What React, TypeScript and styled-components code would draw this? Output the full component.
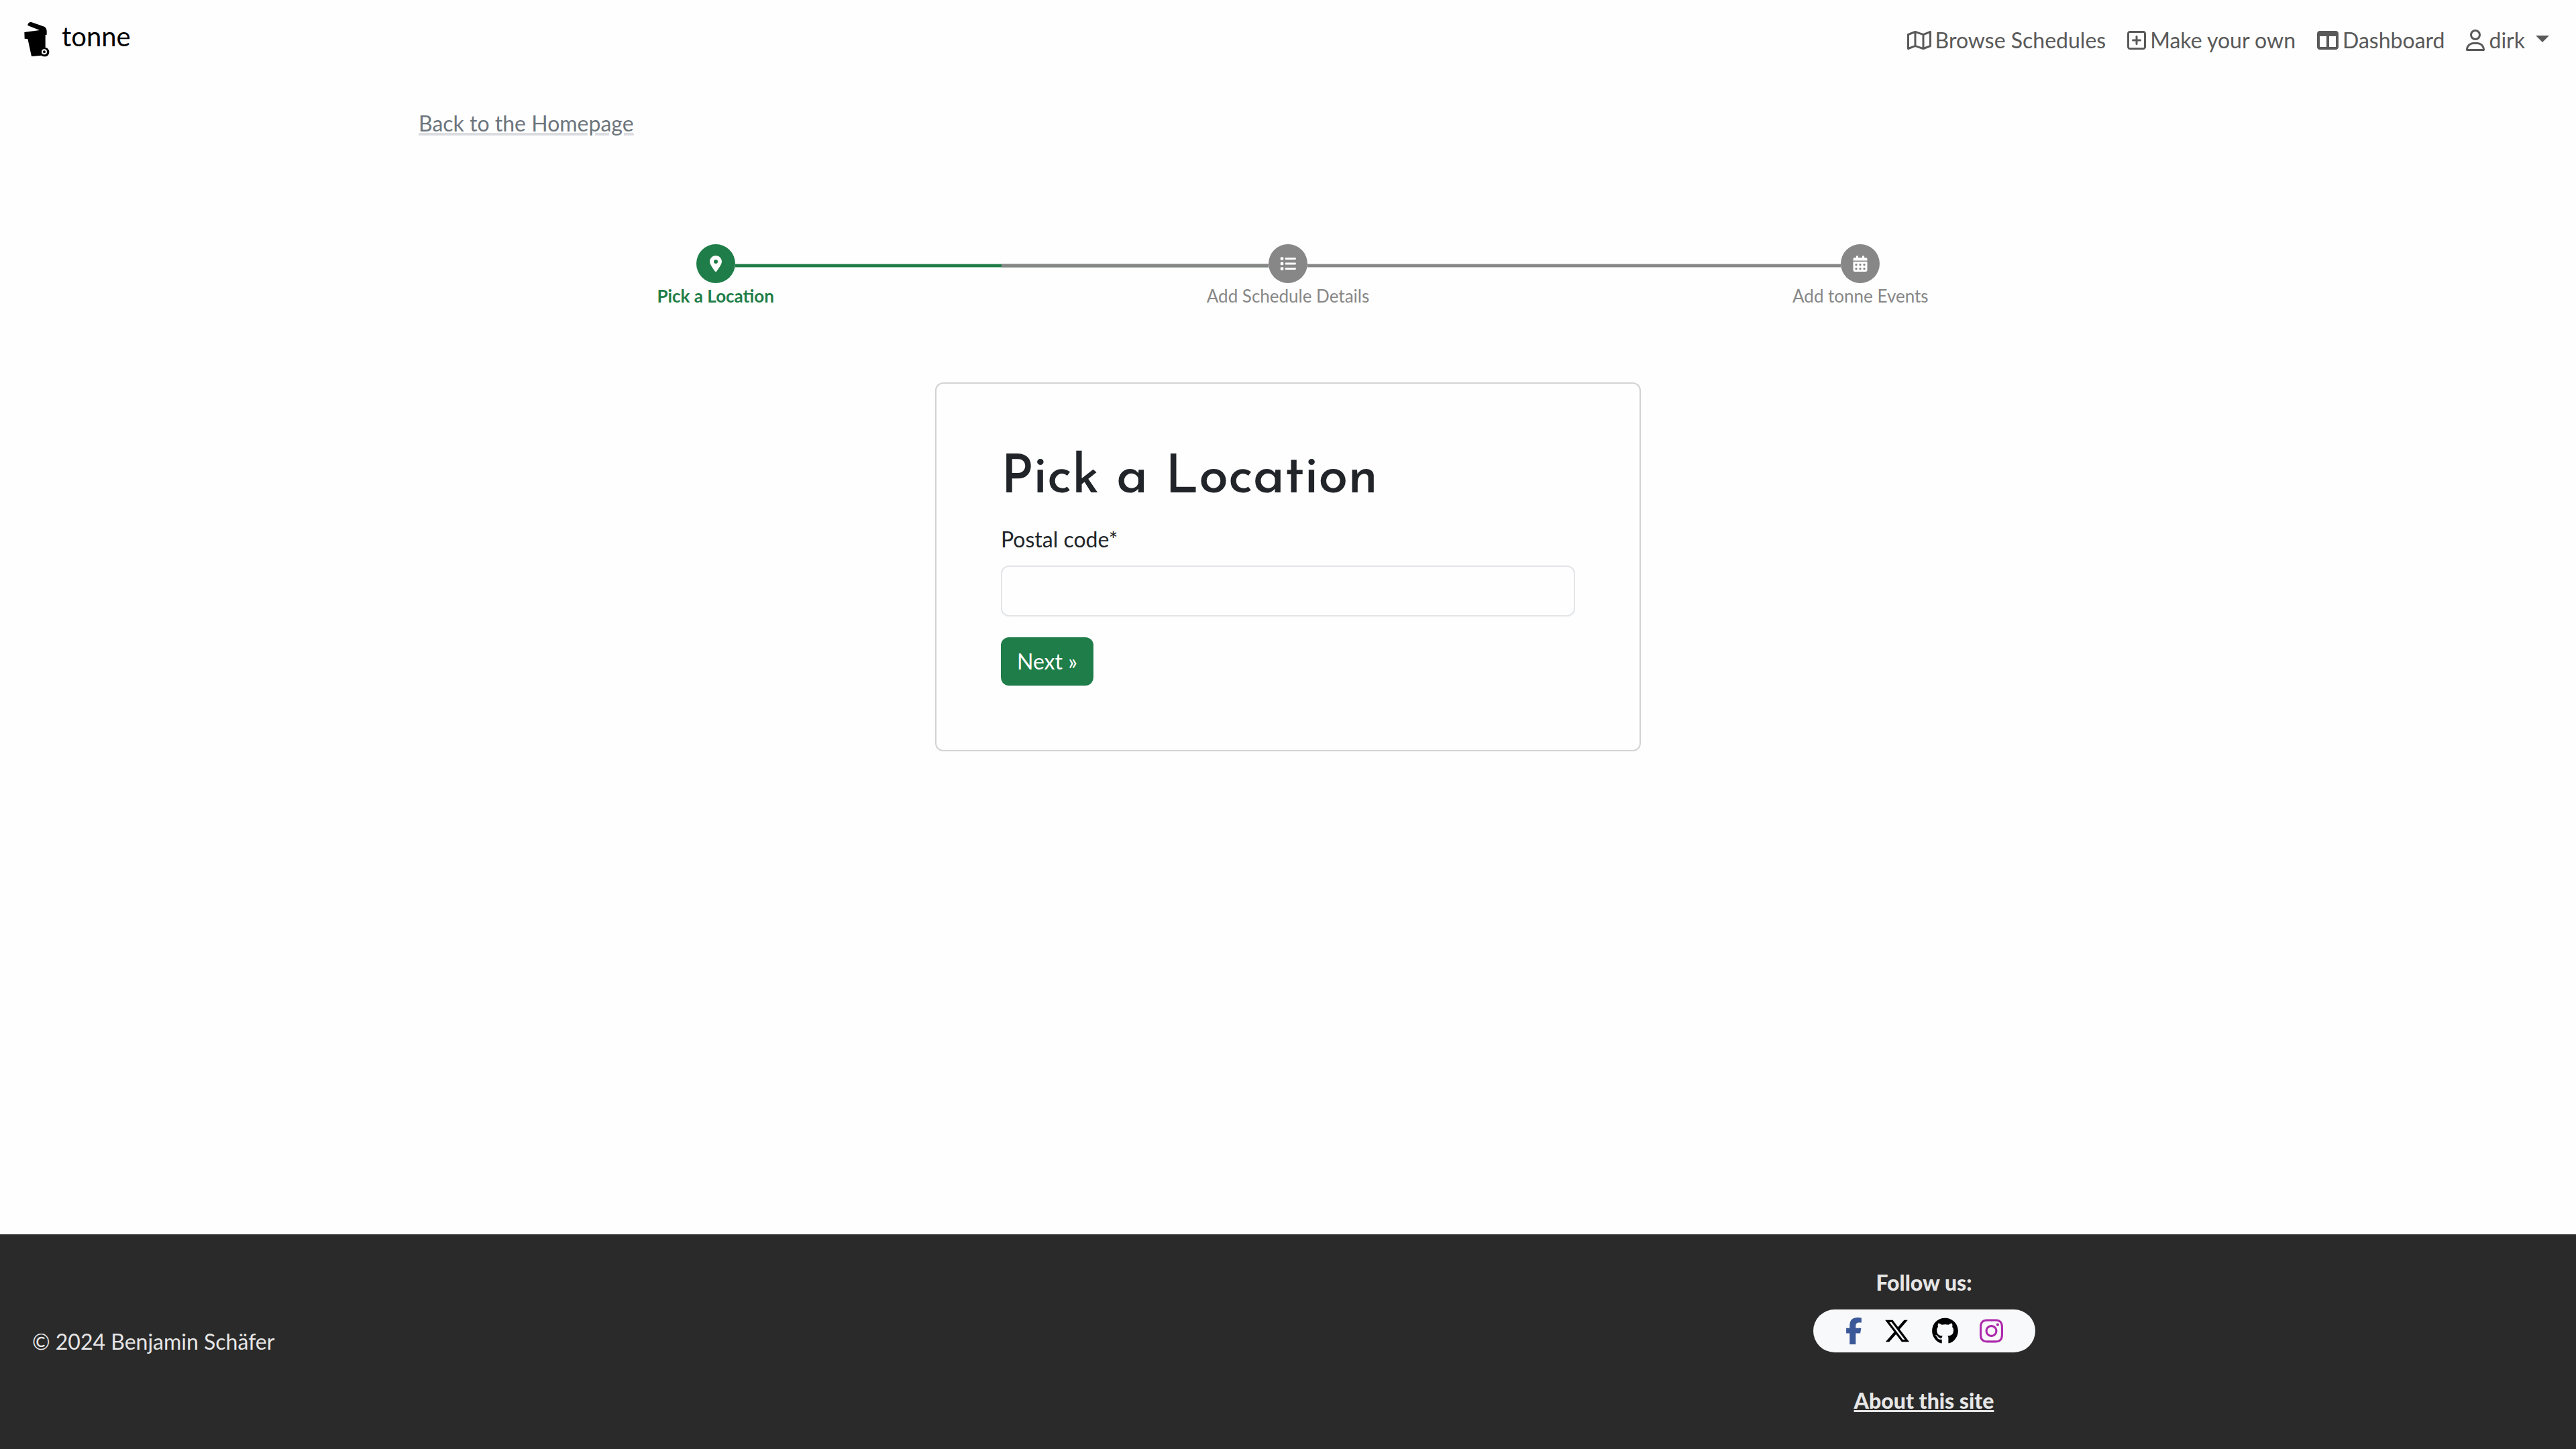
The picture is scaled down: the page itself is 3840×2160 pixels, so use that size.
import React from "react";
import styled, { createGlobalStyle, css } from "styled-components";
import {
  FaCalendarDays,
  FaFacebookF,
  FaGithub,
  FaInstagram,
  FaList,
  FaLocationDot,
  FaRegMap,
  FaRegSquarePlus,
  FaRegUser,
  FaTableColumns,
  FaXTwitter,
} from "react-icons/fa6";

const green = "#1e7d48";
const grey = "#878787";

const GlobalStyle = createGlobalStyle`
  *, *::before, *::after { box-sizing: border-box; }
  body {
    margin: 0;
    background: #fefefe;
    color: #212529;
    font-family: Lato, "Liberation Sans", sans-serif;
    font-size: 32px;
    line-height: 48px;
  }
`;

const Page = styled.div`
  min-height: 100vh;
  display: flex;
  flex-direction: column;
`;

const Navbar = styled.header`
  display: flex;
  justify-content: space-between;
  align-items: center;
  height: 120px;
  padding: 0 40px 0 24px;
`;

const Brand = styled.a`
  display: flex;
  align-items: flex-start;
  gap: 8px;
  height: 60px;
  color: #000;
  font-size: 40px;
  line-height: 48px;
  text-decoration: none;
`;

const Nav = styled.nav`
  display: flex;
  gap: 32px;
`;

const navItem = css`
  display: flex;
  align-items: center;
  gap: 6px;
  padding: 0;
  border: 0;
  background: none;
  color: #595959;
  font: inherit;
  text-decoration: none;
`;

const NavLink = styled.a`
  ${navItem}
`;

const NavMenu = styled.button`
  ${navItem}
`;

const Caret = styled.span`
  margin: 0 0 4px 10px;
  border-top: 10px solid currentColor;
  border-left: 10px solid transparent;
  border-right: 10px solid transparent;
`;

const Main = styled.main`
  flex: 1;
  width: 100%;
  max-width: 2640px;
  margin: 0 auto;
  padding: 40px 24px;
`;

const BackLink = styled.a`
  display: inline-block;
  color: #6c757d;
  text-decoration: underline;
  text-decoration-color: #dadce0;
  text-decoration-thickness: 4px;
`;

const Steps = styled.ol`
  display: grid;
  grid-template-columns: repeat(3, 1fr);
  max-width: 2560px;
  margin: 156px auto 0;
  padding: 0;
  list-style: none;
`;

const Step = styled.li<{ $active?: boolean }>`
  display: flex;
  flex-direction: column;
  align-items: center;
  color: ${(p) => (p.$active ? green : grey)};
  font-size: 26px;
  font-weight: ${(p) => (p.$active ? 700 : 400)};
  line-height: 38px;
`;

const Track = styled.div`
  display: grid;
  grid-template-columns: 1fr 58px 1fr;
  align-items: center;
  width: 100%;
`;

const Line = styled.span<{ $tone: "none" | "done" | "next" | "todo" }>`
  height: 6px;
  margin-top: 6px;
  border: solid transparent;
  border-width: 1px 0;
  ${(p) => p.$tone === "done" && `background: ${green}; border-color: #a9cdb8;`}
  ${(p) => p.$tone === "next" && `background: ${grey}; border-color: #9db3a4;`}
  ${(p) => p.$tone === "todo" && `background: ${grey}; border-color: #cfcfcf;`}
  background-clip: padding-box;
`;

const Dot = styled.span<{ $active?: boolean }>`
  display: flex;
  align-items: center;
  justify-content: center;
  height: 58px;
  border-radius: 50%;
  background: ${(p) => (p.$active ? green : grey)};
  color: #fff;
  font-size: 24px;
`;

const Card = styled.form`
  width: 100%;
  max-width: 1052px;
  margin: 110px auto 0;
  padding: 96px;
  border: 2px solid #d3d3d3;
  border-radius: 12px;
`;

const Title = styled.h1`
  margin: 0 0 20px;
  font-family: "Josefin Sans", Lato, sans-serif;
  font-size: 80px;
  font-weight: 500;
  line-height: 92px;
`;

const Label = styled.label`
  display: block;
  margin-bottom: 15px;
`;

const TextInput = styled.input`
  display: block;
  width: 100%;
  height: 76px;
  margin-bottom: 31px;
  padding: 12px 24px;
  border: 2px solid #e2e4e8;
  border-radius: 12px;
  background: #fefefe;
  color: inherit;
  font: inherit;
`;

const SubmitButton = styled.button`
  display: block;
  padding: 12px 24px;
  border: 0;
  border-radius: 12px;
  background: ${green};
  color: #fff;
  font: inherit;
`;

const Footer = styled.footer`
  display: grid;
  grid-template-columns: 1fr 1fr;
  align-items: center;
  padding: 48px 24px;
  background: #2a2a2a;
  color: #e6e6e6;
`;

const Copyright = styled.div`
  padding-left: 24px;
`;

const Social = styled.div`
  display: flex;
  flex-direction: column;
  align-items: center;
  font-weight: 900;
`;

const Pill = styled.div`
  display: flex;
  align-items: center;
  gap: 32px;
  height: 64px;
  margin: 16px 0 48px;
  padding: 0 48px;
  border-radius: 32px;
  background: #f8f9fa;
`;

const SocialLink = styled.a<{ $color: string; $width: number }>`
  display: flex;
  color: ${(p) => p.$color};

  svg {
    width: ${(p) => p.$width}px;
    height: 40px;
  }
`;

const AboutLink = styled.a`
  color: inherit;
  text-decoration: underline;
  text-decoration-skip-ink: none;
`;

const NavIcon = styled.span<{ $width: number }>`
  display: flex;

  svg {
    width: ${(p) => p.$width}px;
    height: 32px;
  }
`;

const BinLogo = () => (
  <svg width="60" height="60" viewBox="72 96 180 180" aria-hidden="true">
    <path d="M138 104Q127 105 124 116L124 120L177 141L109 150L110 179L124 180L141 258L186 254Q191 259 199 259A19 20 0 0 0 203 219L203 162L209 161L209 143Q207 130 198 125Z" />
    <circle cx="199" cy="238" r="20" />
    <circle cx="198" cy="238" r="9" fill="none" stroke="#fff" strokeWidth="6" />
  </svg>
);

export default function App() {
  return (
    <Page>
      <GlobalStyle />
      <Navbar>
        <Brand href="#">
          <BinLogo />
          tonne
        </Brand>
        <Nav>
          <NavLink href="#">
            <NavIcon $width={36}><FaRegMap /></NavIcon>
            Browse Schedules
          </NavLink>
          <NavLink href="#">
            <NavIcon $width={28}><FaRegSquarePlus /></NavIcon>
            Make your own
          </NavLink>
          <NavLink href="#">
            <NavIcon $width={32}><FaTableColumns /></NavIcon>
            Dashboard
          </NavLink>
          <NavMenu type="button">
            <NavIcon $width={28}><FaRegUser /></NavIcon>
            dirk
            <Caret />
          </NavMenu>
        </Nav>
      </Navbar>

      <Main>
        <BackLink href="#">Back to the Homepage</BackLink>
        <Steps>
          <Step $active>
            <Track>
              <Line $tone="none" />
              <Dot $active><FaLocationDot /></Dot>
              <Line $tone="done" />
            </Track>
            Pick a Location
          </Step>
          <Step>
            <Track>
              <Line $tone="next" />
              <Dot><FaList /></Dot>
              <Line $tone="todo" />
            </Track>
            Add Schedule Details
          </Step>
          <Step>
            <Track>
              <Line $tone="todo" />
              <Dot><FaCalendarDays /></Dot>
              <Line $tone="none" />
            </Track>
            Add tonne Events
          </Step>
        </Steps>

        <Card onSubmit={(e) => e.preventDefault()}>
          <Title>Pick a Location</Title>
          <Label htmlFor="postal-code">Postal code*</Label>
          <TextInput id="postal-code" type="text" />
          <SubmitButton type="submit">Next »</SubmitButton>
        </Card>
      </Main>

      <Footer>
        <Copyright>© 2024 Benjamin Schäfer</Copyright>
        <Social>
          Follow us:
          <Pill>
            <SocialLink href="#" aria-label="Facebook" $color="#3b5998" $width={25}><FaFacebookF /></SocialLink>
            <SocialLink href="#" aria-label="X" $color="#000" $width={40}><FaXTwitter /></SocialLink>
            <SocialLink href="#" aria-label="GitHub" $color="#000" $width={39}><FaGithub /></SocialLink>
            <SocialLink href="#" aria-label="Instagram" $color="#ac2bac" $width={35}><FaInstagram /></SocialLink>
          </Pill>
          <AboutLink href="#">About this site</AboutLink>
        </Social>
      </Footer>
    </Page>
  );
}
